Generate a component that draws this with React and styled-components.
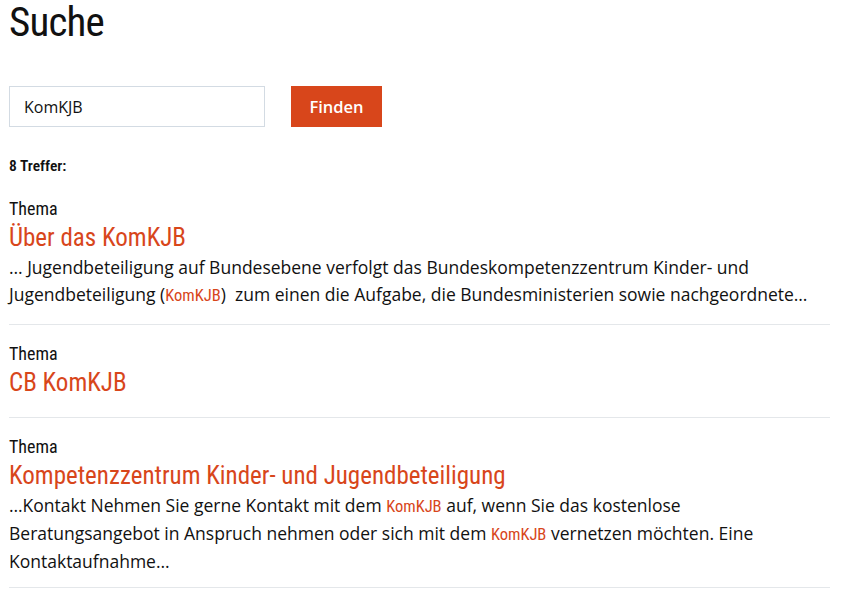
import React from "react";
import styled, { createGlobalStyle } from "styled-components";

const Global = createGlobalStyle`
  html, body { margin: 0; padding: 0; background: #fff; }
  body { font-family: "Open Sans", "Noto Sans", sans-serif; color: #1a1a1a; }
`;

const ORANGE = "#d8461b";
const COND = `"Roboto", "Open Sans", sans-serif`;

const Page = styled.main`
  padding: 0 12px 0 9px;
  width: 821px;
`;

const Title = styled.h1`
  font-family: ${COND};
  font-stretch: condensed;
  font-weight: 400;
  font-size: 41px;
  letter-spacing: -0.8px;
  line-height: 44px;
  margin: 0;
  color: #111;
`;

const SearchForm = styled.form`
  display: flex;
  gap: 26px;
  margin-top: 42px;
`;

const Input = styled.input`
  width: 256px;
  height: 41px;
  box-sizing: border-box;
  border: 1px solid #d3dbe3;
  padding: 0 14px;
  margin: 0;
  font-family: "Open Sans", sans-serif;
  font-size: 16px;
  color: #111;
  outline: none;
`;

const Button = styled.button`
  width: 91px;
  height: 41px;
  border: none;
  margin: 0;
  padding: 0;
  background: ${ORANGE};
  color: #fff;
  font-family: "Open Sans", sans-serif;
  font-weight: 600;
  font-size: 16.5px;
`;

const Count = styled.div`
  font-family: ${COND};
  font-stretch: condensed;
  font-weight: 600;
  font-size: 15.5px;
  line-height: 20px;
  margin-top: 29px;
  color: #111;
`;

const List = styled.div`
  margin-top: 22px;
`;

const Item = styled.article`
  border-bottom: 1px solid #e4e7ea;
  padding-bottom: ${(p) => (p.$hasText ? "15px" : "18px")};
  & + & { padding-top: 18px; }
  &:last-child { padding-bottom: 12px; }
`;

const Kind = styled.div`
  font-family: ${COND};
  font-stretch: condensed;
  font-size: 18px;
  line-height: 22px;
  color: #111;
`;

const ItemTitle = styled.a`
  display: block;
  margin-top: 2px;
  font-family: ${COND};
  font-stretch: condensed;
  font-size: 25px;
  line-height: 32px;
  color: ${ORANGE};
  text-decoration: none;
`;

const Snippet = styled.p`
  margin: 0;
  font-size: 17.5px;
  line-height: 27px;
  color: #111;
`;

const Hit = styled.span`
  font-family: ${COND};
  font-stretch: condensed;
  font-size: 16.5px;
  color: ${ORANGE};
`;

export default function App() {
  return (
    <>
      <Global />
      <Page>
        <Title>Suche</Title>
        <SearchForm onSubmit={(e) => e.preventDefault()}>
          <Input defaultValue="KomKJB" />
          <Button type="submit">Finden</Button>
        </SearchForm>
        <Count>8 Treffer:</Count>
        <List>
          <Item $hasText>
            <Kind>Thema</Kind>
            <ItemTitle href="#">Über das KomKJB</ItemTitle>
            <Snippet>
              … Jugendbeteiligung auf Bundesebene verfolgt das Bundeskompetenzzentrum Kinder- und
              <br />
              Jugendbeteiligung (<Hit>KomKJB</Hit>)&nbsp; zum einen die Aufgabe, die Bundesministerien sowie nachgeordnete…
            </Snippet>
          </Item>
          <Item>
            <Kind>Thema</Kind>
            <ItemTitle href="#">CB KomKJB</ItemTitle>
          </Item>
          <Item $hasText>
            <Kind>Thema</Kind>
            <ItemTitle href="#">Kompetenzzentrum Kinder- und Jugendbeteiligung</ItemTitle>
            <Snippet>
              …Kontakt Nehmen Sie gerne Kontakt mit dem <Hit>KomKJB</Hit> auf, wenn Sie das kostenlose
              <br />
              Beratungsangebot in Anspruch nehmen oder sich mit dem <Hit>KomKJB</Hit> vernetzen möchten. Eine
              <br />
              Kontaktaufnahme…
            </Snippet>
          </Item>
        </List>
      </Page>
    </>
  );
}
